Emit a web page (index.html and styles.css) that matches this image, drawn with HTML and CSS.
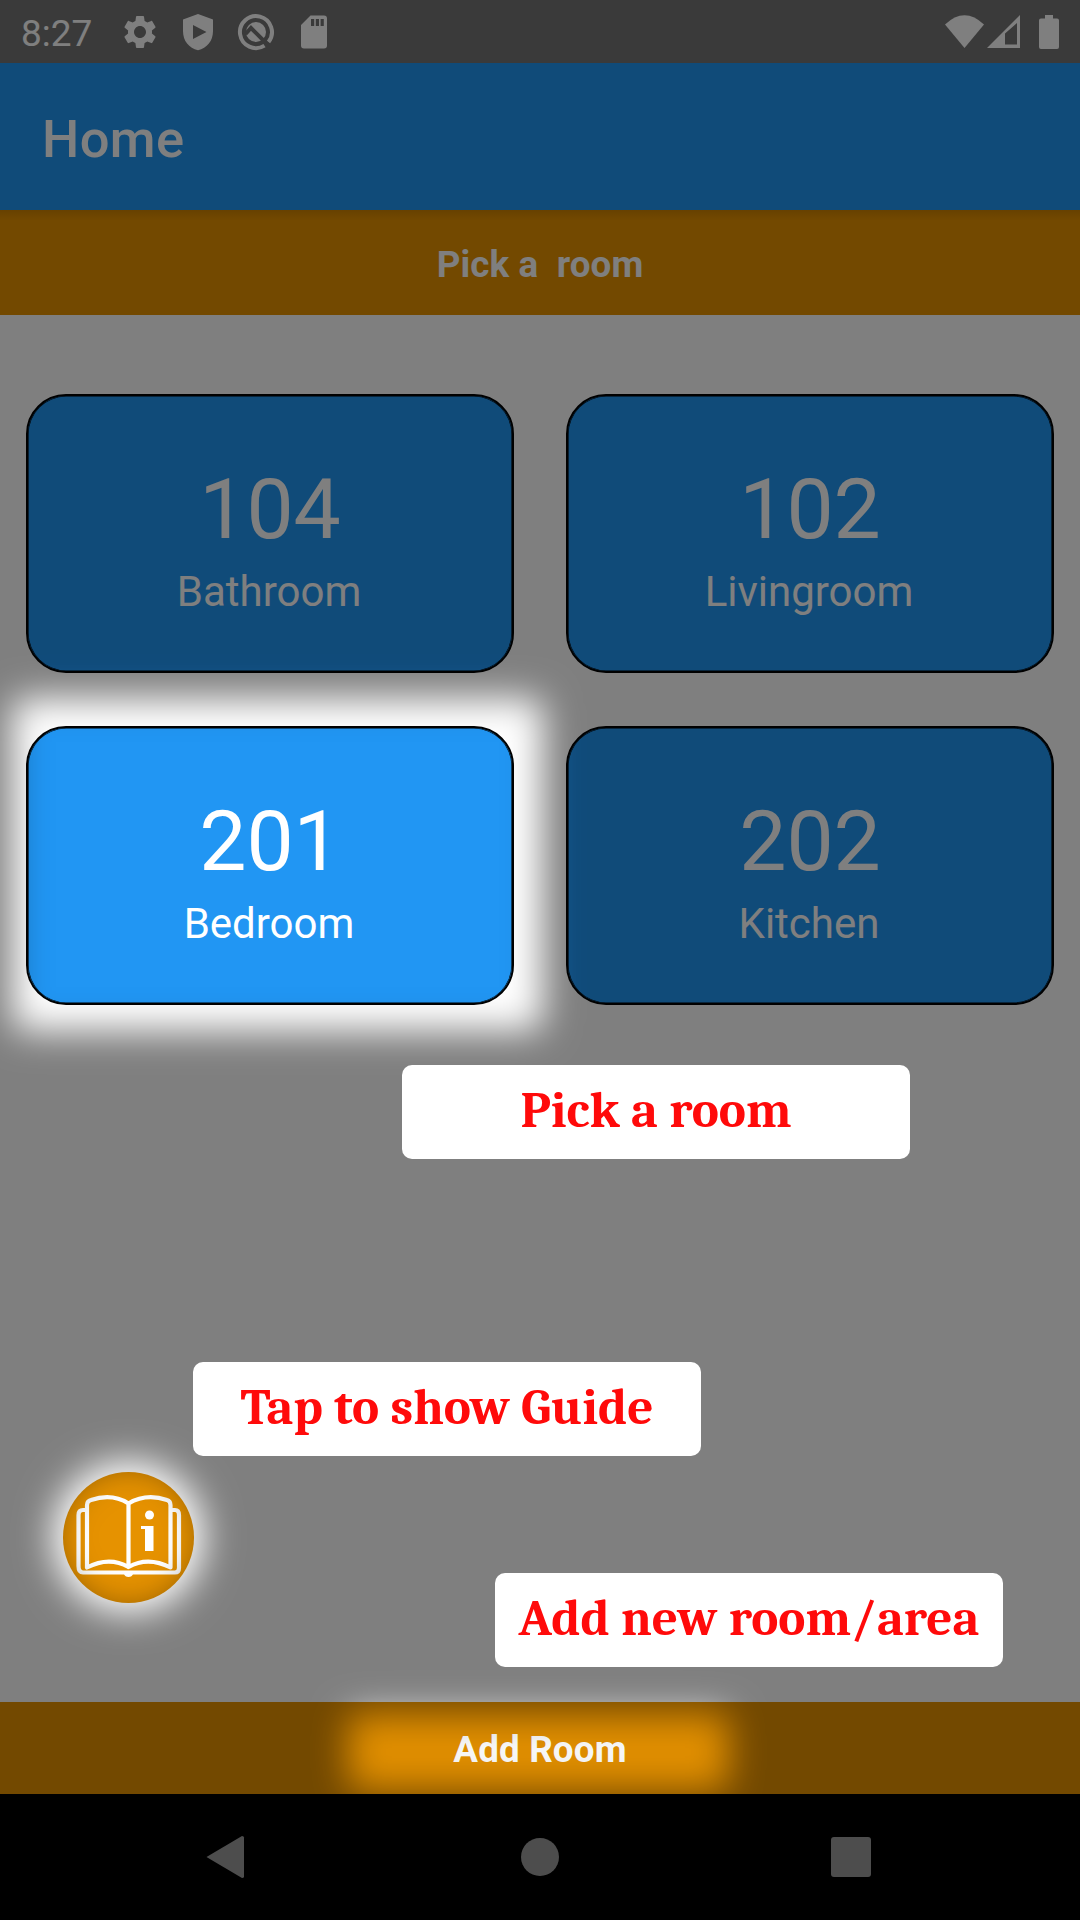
FILE: index.html
```html
<!DOCTYPE html>
<html lang="en">
<head>
<meta charset="utf-8">
<title>Home</title>
<link rel="stylesheet" href="styles.css">
</head>
<body>
<div class="screen">
  <header class="status">
    <span class="clock">8:27</span>
    <div class="notices">
      <svg class="icon" viewBox="0 0 24 24"><path d="M19.14 12.94c.04-.3.06-.61.06-.94 0-.32-.02-.64-.07-.94l2.03-1.58c.18-.14.23-.41.12-.61l-1.92-3.32c-.12-.22-.37-.29-.59-.22l-2.39.96c-.5-.38-1.03-.7-1.62-.94l-.36-2.54c-.04-.24-.24-.41-.48-.41h-3.84c-.24 0-.43.17-.47.41l-.36 2.54c-.59.24-1.13.57-1.62.94l-2.39-.96c-.22-.08-.47 0-.59.22L2.74 8.87c-.12.21-.08.47.12.61l2.03 1.58c-.05.3-.09.63-.09.94s.02.64.07.94l-2.03 1.58c-.18.14-.23.41-.12.61l1.92 3.32c.12.22.37.29.59.22l2.39-.96c.5.38 1.03.7 1.62.94l.36 2.54c.05.24.24.41.48.41h3.84c.24 0 .44-.17.47-.41l.36-2.54c.59-.24 1.13-.56 1.62-.94l2.39.96c.22.08.47 0 .59-.22l1.92-3.32c.12-.22.07-.47-.12-.61l-2.01-1.58zM12 15.6c-1.98 0-3.6-1.62-3.6-3.6s1.62-3.6 3.6-3.6 3.6 1.62 3.6 3.6-1.62 3.6-3.6 3.6z"/></svg>
      <svg class="icon" viewBox="0 0 40 40"><path fill-rule="evenodd" d="M20 2L35 7.5V19C35 29 29 36 20 38.3C11 36 5 29 5 19V7.5ZM15 13V27L28.5 20Z"/></svg>
      <svg class="icon" viewBox="0 0 40 40"><path class="ring" d="M32.5 30A16 16 0 1 0 28.5 33.6"/><circle cx="20" cy="20" r="10"/><path class="handle" d="M9.500 22L15 16L32 33"/></svg>
      <svg class="icon" viewBox="0 0 40 40"><path fill-rule="evenodd" d="M16.500 3.500H30Q33 3.500 33 6.500V33.500Q33 36.500 30 36.500H10Q7 36.500 7 33.500V13ZM17 7V14H20.200V7ZM21.800 7V14H25V7ZM26.600 7V14H29.800V7Z"/></svg>
    </div>
    <div class="signals">
      <svg width="39" height="34" viewBox="0 0 39 34"><path d="M0 9.500Q19.500 -9 39 9.500L19.500 33Z"/></svg>
      <svg width="33" height="34" viewBox="0 0 33 34"><path fill-rule="evenodd" d="M0 33L33 0V33ZM18 18.500V29.500H30V8Z"/></svg>
      <svg class="battery" width="20" height="34" viewBox="0 0 20 34"><path d="M6 0H14V3.500H18Q20 3.500 20 5.500V32Q20 34 18 34H2Q0 34 0 32V5.500Q0 3.500 2 3.500H6Z"/></svg>
    </div>
  </header>
  <div class="appbar">Home</div>
  <div class="banner">Pick a  room</div>
  <main class="rooms">
    <section class="room"><div class="number">104</div><div class="name">Bathroom</div></section>
    <section class="room"><div class="number">102</div><div class="name">Livingroom</div></section>
    <section class="room"><div class="number">201</div><div class="name">Bedroom</div></section>
    <section class="room"><div class="number">202</div><div class="name">Kitchen</div></section>
  </main>
  <div class="guide">
    <svg width="131" height="131" viewBox="0 0 131 131">
      <circle class="disc" cx="65.500" cy="65.500" r="65.500"/>
      <g class="book">
        <path d="M23 38H20Q15.500 38 15.500 43V94Q15.500 100.500 20 100.500H112Q116 100.500 116 96V43Q116 38 112 38H108"/>
        <path d="M65.500 95Q46 84 24 95.500V33Q24 29 28 28Q49 21 65.500 31.500Q83 21 104 28Q107.500 29 107.500 33V95.500Q85 84 65.500 95V31"/>
      </g>
      <path class="ink" d="M61 102H70Q69 105 65.500 105Q62 105 61 102ZM78 54H90.500V79H82V57H78Z"/>
      <circle class="ink" cx="86.500" cy="43" r="4.500"/>
    </svg>
  </div>
  <div class="add">Add Room</div>
  <nav class="nav">
    <svg width="40" height="44" viewBox="0 0 40 44"><path d="M1.500 22L37 1Q39 1 39 2.500V41.500Q39 43 37 43Z"/></svg>
    <svg class="home" width="40" height="44" viewBox="0 0 40 44"><circle cx="20" cy="22" r="19"/></svg>
    <svg width="40" height="44" viewBox="0 0 40 44"><rect y="2" width="40" height="40" rx="3"/></svg>
  </nav>

  <svg class="shade" width="1080" height="1920" viewBox="0 0 1080 1920">
    <defs>
      <filter id="soft" filterUnits="userSpaceOnUse" x="-100" y="0" width="1280" height="1920"><feGaussianBlur stdDeviation="18"/></filter>
      <mask id="spots" maskUnits="userSpaceOnUse" x="0" y="0" width="1080" height="1920">
        <rect width="1080" height="1920" fill="#fff"/>
        <g filter="url(#soft)">
          <rect x="12" y="698" width="531" height="333" rx="14"/>
          <circle cx="128.500" cy="1537" r="76"/>
          <rect x="348" y="1714" width="381" height="76" rx="10" fill-opacity=".95"/>
        </g>
      </mask>
    </defs>
    <rect width="1080" height="1920" fill="#000" fill-opacity=".5" mask="url(#spots)"/>
  </svg>
  <div class="tip tip-pick">Pick a room</div>
  <div class="tip tip-guide">Tap to show Guide</div>
  <div class="tip tip-add">Add new room/area</div>
</div>
</body>
</html>
```
FILE: styles.css
```css
* { box-sizing: border-box; }
body { margin: 0; }
svg { display: block; }

.screen {
  position: relative;
  display: flex;
  flex-direction: column;
  width: 1080px;
  height: 1920px;
  overflow: hidden;
  background: #fff;
  color: #fff;
  font-family: Roboto, sans-serif;
}

.status {
  display: flex;
  align-items: center;
  height: 63px;
  padding: 0 21px;
  background: #757575;
  fill: #fff;
}
.clock { width: 99px; font-size: 37px; line-height: 43px; padding-top: 3px; }
.notices { display: flex; gap: 18px; }
.icon { width: 40px; height: 40px; }
.ring { fill: none; stroke: #fff; stroke-width: 4; }
.handle { fill: none; stroke: #757575; stroke-width: 4; }
.signals { display: flex; gap: 3px; margin-left: auto; }
.battery { margin-left: 16px; }

.appbar {
  height: 147px;
  padding: 46px 42px 0;
  background: #2196f3;
  font-size: 52.5px;
  line-height: 61px;
  font-weight: 500;
  letter-spacing: .4px;
}
.banner {
  height: 105px;
  padding-top: 33px;
  background: linear-gradient(#cf8300, #e69200 10px);
  font-size: 36.75px;
  line-height: 43px;
  font-weight: 700;
  letter-spacing: .1px;
  text-align: center;
  white-space: pre;
}

.rooms {
  display: grid;
  grid-template-columns: 488px 488px;
  grid-auto-rows: 279px;
  gap: 53px 52px;
  padding: 79px 26px 0;
}
.room {
  padding-top: 65px;
  border: 2px solid #000;
  border-radius: 40px;
  background: #2196f3;
  box-shadow: inset 0 0 0 .6px #000;
  text-align: center;
}
.number { font-size: 84px; line-height: 98px; }
.name { margin: 8px 2px 0 0; font-size: 42px; line-height: 49px; }

.guide { flex: 1; display: flex; align-items: flex-end; padding: 0 0 99px 63px; }
.disc { fill: #e69200; }
.book { fill: none; stroke: #fff; stroke-width: 4.2; stroke-linejoin: round; }
.ink { fill: #fff; }

.add {
  height: 92px;
  padding-top: 26px;
  background: #e69200;
  font-size: 36.75px;
  line-height: 43px;
  font-weight: 700;
  letter-spacing: .15px;
  text-align: center;
}
.nav {
  display: flex;
  justify-content: space-between;
  align-items: center;
  height: 126px;
  padding: 0 209px 0 205px;
  background: #000;
  fill: #9b9b9b;
}
.home { margin-left: 4px; }

.shade { position: absolute; top: 0; left: 0; }

.tip {
  position: absolute;
  width: 508px;
  height: 94px;
  border-radius: 10px;
  background: #fff;
  color: #ff0a0a;
  font: 700 51.2px/60px Cambria, Caladea, "Liberation Serif", serif;
  text-align: center;
  white-space: nowrap;
  padding-top: 16px;
}
.tip-pick { left: 402px; top: 1065px; }
.tip-guide { left: 193px; top: 1362px; }
.tip-add { left: 495px; top: 1573px; }
```
